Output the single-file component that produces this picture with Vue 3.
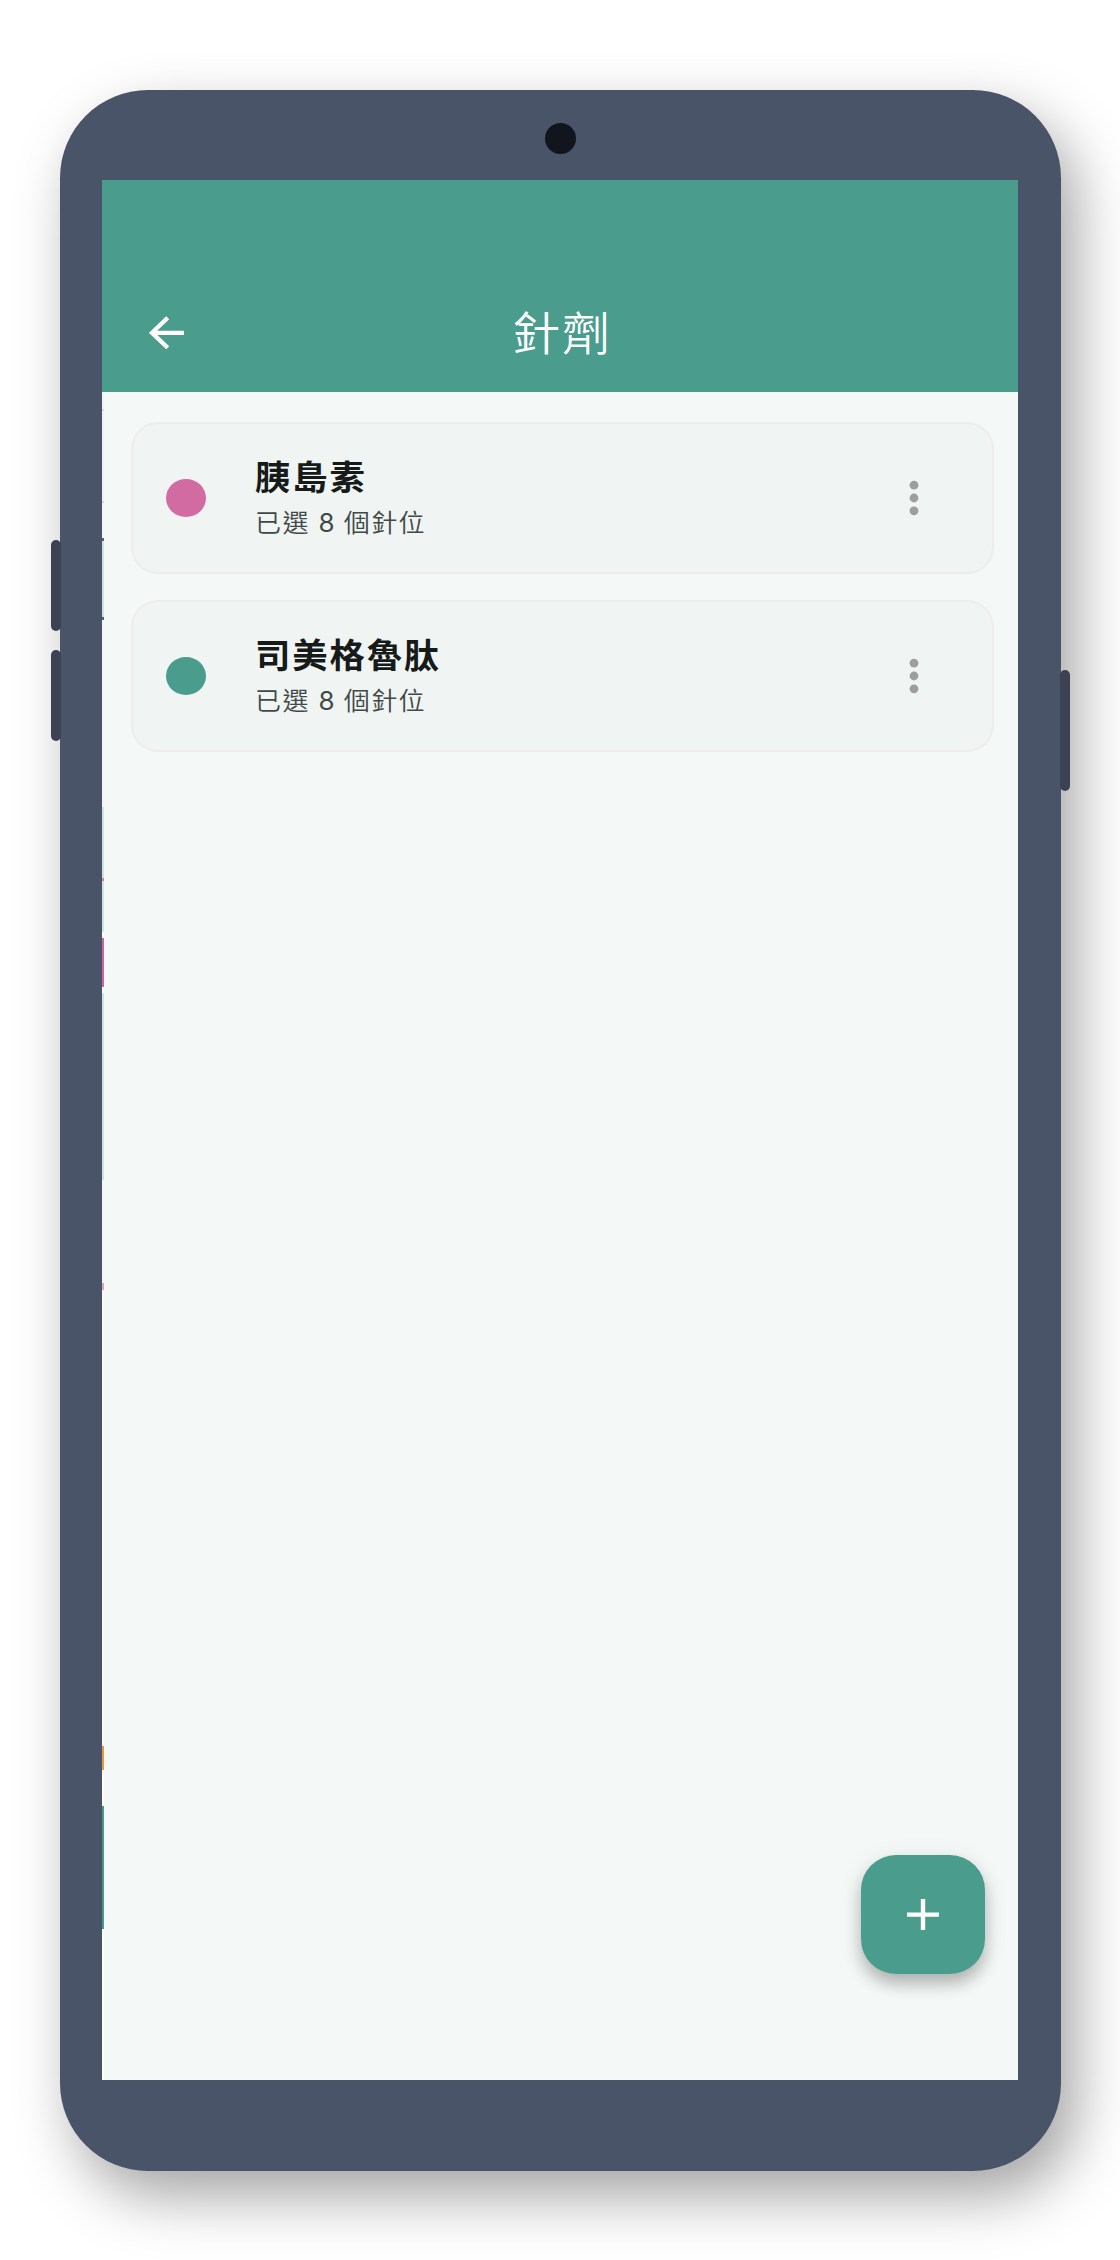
<script setup>
const drugs = [
  { name: '胰島素', note: ['已選', '8', '個針位'], color: '#d16ba2' },
  { name: '司美格魯肽', note: ['已選', '8', '個針位'], color: '#4a9c8d' },
]

// Sliver of the previous page still visible at the left edge: [height, colour]
const sliver = [
  [17, '#f1f3f3'], [2, '#d9dcdc'], [90, '#f1f3f3'], [2, '#d5d9d9'], [35, '#f4f6f6'],
  [3, '#59635f'], [76, '#cfe4df'], [3, '#59635f'], [187, '#f4f6f6'],
  [71, '#d0e4df'], [3, '#d184ad'], [51, '#d0e4df'], [6, '#ffffff'],
  [49, '#cf629a'], [6, '#ffffff'], [187, '#d0e4df'], [103, '#f5f7f7'],
  [7, '#dda3c2'], [456, '#fafbfb'], [24, '#e39a3d'], [36, '#ffffff'],
  [123, '#479a8a'], [151, '#fcfefd'],
]
</script>

<template>
  <div class="stage">
    <div class="phone">
      <span class="key key-up"></span>
      <span class="key key-down"></span>
      <span class="key key-power"></span>
      <div class="bezel"><span class="camera"></span></div>
      <div class="screen">
        <header class="bar">
          <svg class="back" width="36" height="34" viewBox="0 0 36 34">
            <path d="M18.7 1.8 3 16.8l15.7 15M3 16.8h32" fill="none" stroke="#fff" stroke-width="4.3" />
          </svg>
          <h1>針劑</h1>
        </header>
        <main class="list">
          <article v-for="d in drugs" :key="d.name" class="card">
            <span class="dot" :style="{ background: d.color }"></span>
            <div class="text">
              <h2>{{ d.name }}</h2>
              <p>{{ d.note[0] }} <span class="count">{{ d.note[1] }}</span> {{ d.note[2] }}</p>
            </div>
            <svg class="more" width="10" height="36" viewBox="0 0 10 36">
              <g fill="#9e9e9e">
                <circle cx="5" cy="5.2" r="4.4" />
                <circle cx="5" cy="18" r="4.4" />
                <circle cx="5" cy="30.8" r="4.4" />
              </g>
            </svg>
          </article>
        </main>
        <div class="sliver">
          <span v-for="(s, i) in sliver" :key="i" :style="{ height: s[0] + 'px', background: s[1] }"></span>
        </div>
        <button class="fab" aria-label="新增">
          <svg width="32" height="31" viewBox="0 0 32 31">
            <path d="M0 15.6h32M16 0v31" stroke="#fff" stroke-width="4.4" />
          </svg>
        </button>
      </div>
    </div>
  </div>
</template>

<style>
body {
  margin: 0;
  background: #fff;
}
</style>

<style scoped>
.stage {
  box-sizing: border-box;
  width: 1120px;
  height: 2260px;
  padding: 90px 59px 89px 60px;
  overflow: hidden;
  background: #fff;
  font-family: "Noto Sans CJK TC", "Noto Sans", sans-serif;
}
.phone {
  position: relative;
  box-sizing: border-box;
  height: 2081px;
  padding: 0 43px 91px 42px;
  border-radius: 88px;
  background: #4a5468;
  box-shadow: 15px 25px 58px rgba(0, 0, 0, 0.36);
}
.key {
  position: absolute;
  width: 10px;
  height: 91px;
  border-radius: 5px;
  background: #3c4153;
}
.key-up { left: -9px; top: 450px; }
.key-down { left: -9px; top: 560px; }
.key-power { right: -9px; top: 580px; height: 121px; }
.bezel {
  display: flex;
  justify-content: center;
  box-sizing: border-box;
  height: 90px;
  padding: 33px 0 0 1px;
}
.camera {
  width: 31px;
  height: 31px;
  border-radius: 50%;
  background: #12151e;
}
.screen {
  position: relative;
  height: 1900px;
  background: #f4f8f7;
}
.bar {
  display: grid;
  grid-template-columns: 100px 1fr 100px;
  align-items: center;
  box-sizing: border-box;
  height: 212px;
  padding-top: 94px;
  background: #4a9c8d;
}
.back {
  margin-left: 47px;
  margin-top: -1px;
}
h1 {
  margin: -7px 0 0 4px;
  color: #fff;
  font-size: 46px;
  line-height: 60px;
  font-weight: 350;
  letter-spacing: 2px;
  text-align: center;
  transform: scaleX(1.04);
}
.list {
  display: flex;
  flex-direction: column;
  gap: 26px;
  padding: 30px 24px 0 29px;
}
.card {
  display: flex;
  align-items: center;
  box-sizing: border-box;
  height: 152px;
  padding: 0 73px 0 33px;
  border: 2px solid #ededed;
  border-radius: 27px;
  background: #f0f4f3;
}
.dot {
  width: 40px;
  height: 38px;
  border-radius: 50%;
}
.text {
  flex: 1;
  margin-left: 49px;
  transform: scaleX(1.04);
  transform-origin: left;
}
h2 {
  margin: 0;
  color: #161a19;
  font-size: 34px;
  line-height: 46px;
  font-weight: 700;
  letter-spacing: 1.8px;
}
p {
  margin: 2px 0 0;
  color: #3f4947;
  font-size: 25px;
  line-height: 40px;
  font-weight: 350;
  letter-spacing: 1.35px;
}
.count {
  margin: 0 0.5px 0 1.5px;
  font-family: Inter, "Open Sans", sans-serif;
  font-weight: 400;
}
.sliver {
  position: absolute;
  left: 0;
  top: 212px;
  display: flex;
  flex-direction: column;
  width: 2px;
  height: 1688px;
}
.fab {
  position: absolute;
  right: 33px;
  bottom: 106px;
  display: flex;
  align-items: center;
  justify-content: center;
  width: 124px;
  height: 119px;
  padding: 0;
  border: 0;
  border-radius: 35px;
  background: #4a9c8d;
  box-shadow: 0 10px 16px rgba(0, 0, 0, 0.24), 0 4px 26px rgba(0, 0, 0, 0.08);
}
</style>
